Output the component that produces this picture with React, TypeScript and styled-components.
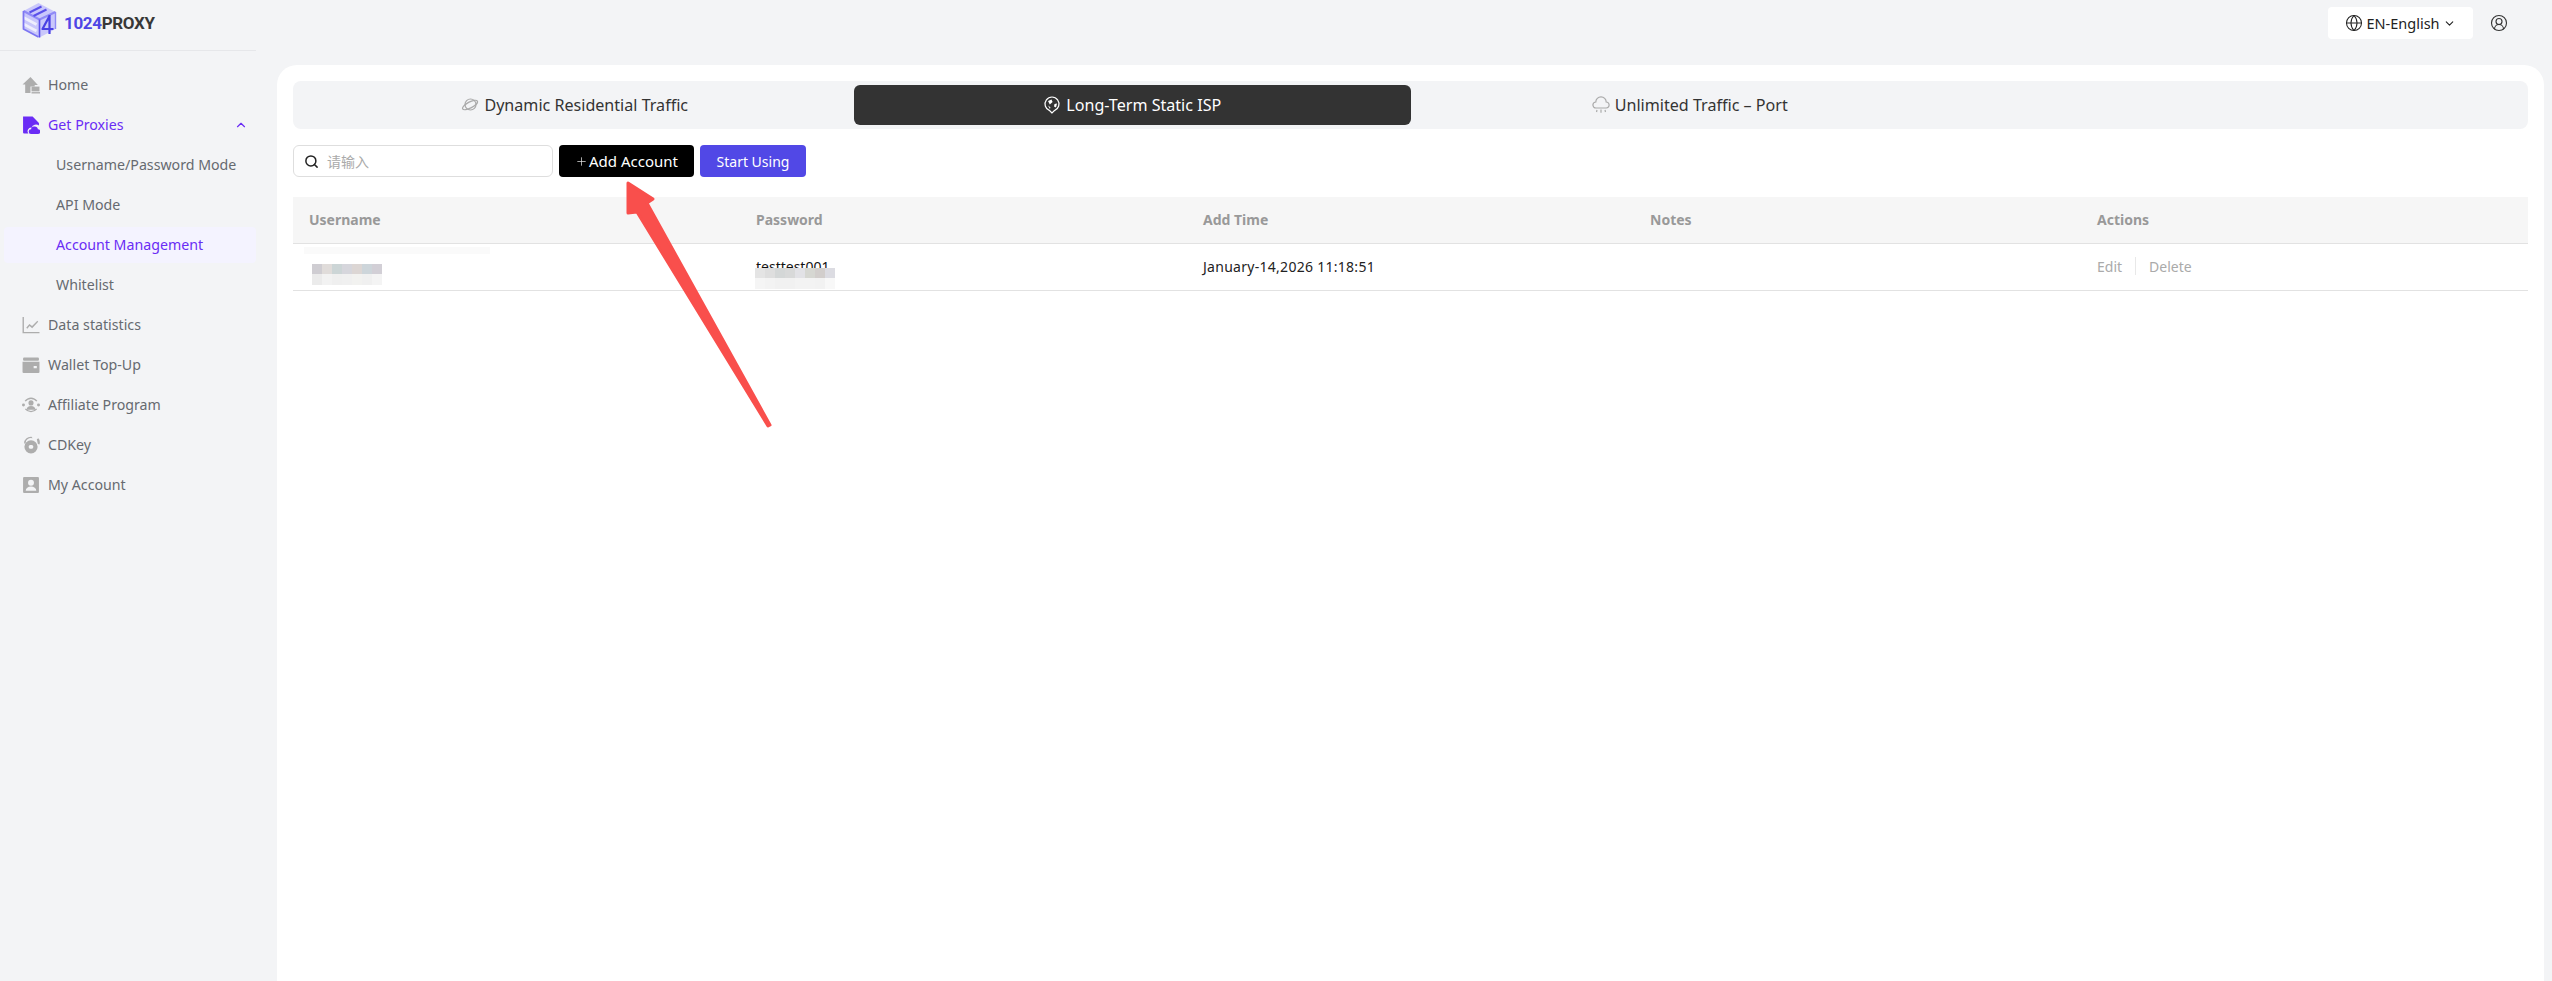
import React from "react";
import styled, { createGlobalStyle } from "styled-components";
import { ChevronDown, ChevronUp, Search, Globe, CircleUserRound, Plus } from "lucide-react";

const FONT = `"Noto Sans", "Noto Sans CJK SC", sans-serif`;

const Global = createGlobalStyle`
  html, body { margin: 0; padding: 0; height: 100%; background: #f3f4f6; overflow: hidden; }
  body { font-family: ${FONT}; }
  * { box-sizing: border-box; }
`;

const Page = styled.div`
  position: relative;
  display: flex;
  width: 100%;
  height: 100vh;
  background: #f3f4f6;
  overflow: hidden;
`;
const Sidebar = styled.aside`
  width: 277px;
  flex: none;
`;
const LogoRow = styled.div`
  width: 256px;
  height: 51px;
  padding: 2px 0 0 21px;
  display: flex;
  align-items: center;
  gap: 6px;
  border-bottom: 1px solid #e6e7ea;
`;
const LogoText = styled.div`
  font-family: "Roboto", sans-serif;
  font-weight: 700;
  font-size: 17px;
  letter-spacing: -0.35px;
  color: #383838;
  margin-top: -6px;
`;
const LogoAccent = styled.span`
  color: #4f46e5;
`;
const Menu = styled.nav`
  display: flex;
  flex-direction: column;
  padding: 14px 21px 0 4px;
`;
const Item = styled.div<{ $active?: boolean; $sub?: boolean; $current?: boolean }>`
  height: 36px;
  margin: 2px 0;
  padding-bottom: 1px;
  display: flex;
  align-items: center;
  gap: 8px;
  padding-left: ${(p) => (p.$sub ? "52px" : "18px")};
  font-size: 14.2px;
  color: ${(p) => (p.$active || p.$current ? "#6a2cf5" : "#666a70")};
  background: ${(p) => (p.$current ? "#f4f3ff" : "transparent")};
  border-radius: 4px;
`;
const ItemIcon = styled.svg<{ $active?: boolean }>`
  width: 18px;
  height: 18px;
  flex: none;
  fill: ${(p) => (p.$active ? "#6a2cf5" : "#adadad")};
`;
const Caret = styled(ChevronUp)`
  margin-left: auto;
  margin-right: 8px;
  color: #6a2cf5;
`;
const Main = styled.main`
  flex: 1;
  min-width: 0;
  display: flex;
  flex-direction: column;
  padding-right: 8px;
`;
const Topbar = styled.header`
  height: 65px;
  flex: none;
  padding: 7px 36px 0 0;
  display: flex;
  justify-content: flex-end;
  align-items: flex-start;
  gap: 17px;
`;
const LangButton = styled.div`
  width: 145px;
  height: 32px;
  background: #fff;
  border-radius: 4px;
  display: flex;
  align-items: center;
  justify-content: center;
  gap: 3px;
  font-size: 14.5px;
  color: #222;
`;
const UserIcon = styled(CircleUserRound)`
  margin-top: 7px;
  color: #333;
`;
const Card = styled.section`
  flex: 1;
  background: #fff;
  border-radius: 20px 20px 0 0;
  padding: 16px 16px 0 16px;
`;
const TabBar = styled.div`
  height: 48px;
  background: #f3f4f6;
  border-radius: 8px;
  display: flex;
  align-items: center;
  padding: 0 3px;
`;
const Tab = styled.div<{ $active?: boolean }>`
  width: 557.5px;
  height: 40px;
  display: flex;
  align-items: center;
  justify-content: center;
  gap: 5px;
  font-size: 16.1px;
  border-radius: 6px;
  color: ${(p) => (p.$active ? "#fff" : "#333")};
  background: ${(p) => (p.$active ? "#333" : "transparent")};
`;
const TabIcon = styled.svg<{ $active?: boolean }>`
  width: 18px;
  height: 18px;
  flex: none;
  fill: none;
  stroke: ${(p) => (p.$active ? "#fff" : "#aaa")};
  stroke-width: 1.2;
`;
const Toolbar = styled.div`
  display: flex;
  gap: 6px;
  margin-top: 16px;
  height: 32px;
`;
const SearchBox = styled.div`
  width: 260px;
  height: 32px;
  border: 1px solid #dedede;
  border-radius: 6px;
  display: flex;
  align-items: center;
  gap: 8px;
  padding-left: 10px;
  font-size: 14px;
  color: #aaa;
`;
const ActionButton = styled.div<{ $bg: string; $w: number; $size?: number }>`
  width: ${(p) => p.$w}px;
  height: 32px;
  background: ${(p) => p.$bg};
  color: #fff;
  border-radius: 4px;
  font-size: ${(p) => p.$size ?? 14}px;
  display: flex;
  align-items: center;
  justify-content: center;
  gap: 1px;
`;
const Table = styled.div`
  margin-top: 20px;
`;
const Row = styled.div<{ $head?: boolean }>`
  display: grid;
  grid-template-columns: repeat(5, 1fr);
  height: 47px;
  padding-bottom: 2px;
  align-items: center;
  background: ${(p) => (p.$head ? "#f6f6f6" : "#fff")};
  border-bottom: 1px solid #e2e2e2;
  font-size: 14px;
  font-weight: ${(p) => (p.$head ? 700 : 400)};
  color: ${(p) => (p.$head ? "#999" : "#222")};
`;
const Cell = styled.div`
  padding-left: 16px;
`;
const DateCell = styled(Cell)`
  letter-spacing: 0.28px;
`;
const UserCell = styled.div`
  align-self: stretch;
  padding: 3px 0 0 11px;
  display: flex;
  flex-direction: column;
  gap: 10px;
`;
const FaintBar = styled.div`
  width: 186px;
  height: 7px;
  background: #fafafa;
`;
const Mosaic = styled.div<{ $indent?: number }>`
  display: grid;
  grid-auto-flow: column;
  grid-auto-columns: 10px;
  grid-template-rows: 10px 11px;
  width: max-content;
  margin-left: ${(p) => p.$indent ?? 0}px;
`;
const Pixel = styled.i<{ $c: string }>`
  display: block;
  background: ${(p) => p.$c};
`;
const PasswordCell = styled(Cell)`
  position: relative;
  color: #111;
`;
const PasswordMask = styled(Mosaic)`
  position: absolute;
  left: 15px;
  top: 11px;
  margin: 0;
`;
const Actions = styled(Cell)`
  display: flex;
  align-items: center;
  gap: 13px;
  color: #aaa;
`;
const Sep = styled.span`
  width: 1px;
  height: 18px;
  background: #e8e8e8;
`;
const Arrow = styled.svg`
  position: absolute;
  left: 620px;
  top: 175px;
  width: 155px;
  height: 260px;
  pointer-events: none;
`;

const Logo = () => (
  <svg width="37" height="36" viewBox="0 0 36 36" style={{ marginTop: -12 }}>
    <g fill="none" strokeLinejoin="round">
      <path d="M2 9 L17 1 L34 10 L34 27 L18 35.5 L2 27 Z" fill="#c9c7fb" />
      <path d="M2 9 L18 17.5 L34 10" stroke="#8f8af6" strokeWidth="2" />
      <path d="M8 10.5 L20 4.5 M12 14 L25 7.5" stroke="#5a50ea" strokeWidth="2.2" />
      <path d="M2 15.5 L15 22.5 M2 22 L15 29" stroke="#eeeefd" strokeWidth="2.6" />
      <path d="M18 17.5 V35.5" stroke="#5a50ea" strokeWidth="1.6" />
      <path d="M28 14 L21 27 L32 27 M28 13 V32" stroke="#4a40e4" strokeWidth="2.2" />
      <path d="M2 9 V27 L17 35" stroke="#7d76f2" strokeWidth="1.8" />
      <path d="M34 10 V27" stroke="#8f8af6" strokeWidth="1.4" />
    </g>
  </svg>
);

const icons: Record<string, React.ReactNode> = {
  home: (
    <>
      <path d="M8 1 L0.5 8 H3 V16 H8 V10 H12 V8.5 H15 L8 1 Z" />
      <rect x="9" y="10" width="7.5" height="4.5" />
      <rect x="9" y="15.2" width="8" height="1.3" />
    </>
  ),
  proxies: (
    <path d="M1 0.5 H10 L16 6.5 V9 A4.5 4.5 0 0 0 9 11 A3.4 3.4 0 0 0 6 16.5 H2 A1 1 0 0 1 1 15.5 Z M12 10 A3 3 0 0 1 15 12.5 A2.2 2.2 0 0 1 15 17 H8.5 A2.2 2.2 0 0 1 8.6 12.6 A3 3 0 0 1 12 10 Z" />
  ),
  data: (
    <>
      <path d="M0.5 1 H1.8 V15 H16.5 V16.3 H0.5 Z" />
      <path d="M4 11 L7 7.5 L9.5 9.5 L14.5 4.5 L15.3 5.5 L9.6 11.5 L7.2 9.5 L5 12 Z" />
    </>
  ),
  wallet: (
    <>
      <rect x="1" y="1.5" width="15" height="3" rx="1" />
      <path d="M0.5 5.5 H16.5 V15 A1 1 0 0 1 15.5 16 H1.5 A1 1 0 0 1 0.5 15 Z M11 9.5 V11.5 H14 V9.5 Z" fillRule="evenodd" />
    </>
  ),
  affiliate: (
    <>
      <circle cx="8.5" cy="6.5" r="2.4" />
      <path d="M4.5 13 A4 3.5 0 0 1 12.5 13 Z" />
      <circle cx="1.4" cy="8.5" r="1.4" />
      <circle cx="15.6" cy="8.5" r="1.4" />
      <path d="M2.5 4.5 A7.5 7.5 0 0 1 14.5 4.5 L13.5 5.3 A6.2 6.2 0 0 0 3.5 5.3 Z M2.7 12.5 A7.5 7.5 0 0 0 14.3 12.5 L13.3 11.8 A6.2 6.2 0 0 1 3.7 11.8 Z" />
    </>
  ),
  cdkey: (
    <>
      <path d="M8.5 4 A6 6 0 1 1 8.5 16.5 A6 6 0 1 1 8.5 4 Z M8.5 8.5 A1.8 1.8 0 1 0 8.5 12 A1.8 1.8 0 1 0 8.5 8.5 Z" fillRule="evenodd" />
      <path d="M2 7 A6.5 6 0 0 1 9 0.8 L10 2.2 A5 5 0 0 0 3.4 7 Z M14 3 L15.5 2.2 A6 6 0 0 1 16.5 8 L15 7.5 Z" />
    </>
  ),
  account: (
    <path fillRule="evenodd" d="M2 1 H15 A1 1 0 0 1 16 2 V15 A1 1 0 0 1 15 16 H2 A1 1 0 0 1 1 15 V2 A1 1 0 0 1 2 1 Z M8.5 3.5 A2.8 2.8 0 1 0 8.5 9.1 A2.8 2.8 0 1 0 8.5 3.5 Z M3.5 14 H13.5 A5 4 0 0 0 3.5 14 Z" />
  ),
};

const NavIcon = ({ name, active }: { name: string; active?: boolean }) => (
  <ItemIcon viewBox="0 0 17 17" $active={active}>
    {icons[name]}
  </ItemIcon>
);

const userRows = [
  ["#cfcdd2", "#ebebeb"],
  ["#e0dcda", "#f2f2f2"],
  ["#ccd5d6", "#efefef"],
  ["#d6d6dc", "#f0f0f0"],
  ["#dcd6d4", "#f2f2f0"],
  ["#cdd5da", "#f0f0f0"],
  ["#d2cfd6", "#f4f4f4"],
];
const passRows = [
  ["#e4e4e4", "#f5f5f5"],
  ["#dedede", "#f3f3f3"],
  ["#d4d7d7", "#f1f1f1"],
  ["#d8d9d9", "#f1f1f1"],
  ["#e2e2e6", "#f3f3f3"],
  ["#d6d7d2", "#f3f3f3"],
  ["#d2cecc", "#f2f2f2"],
  ["#dcdce2", "#f8f8f8"],
];

const Pixels = ({ cols }: { cols: string[][] }) => (
  <>
    {cols.flatMap((c, i) => [<Pixel key={`${i}a`} $c={c[0]} />, <Pixel key={`${i}b`} $c={c[1]} />])}
  </>
);

export default function App() {
  return (
    <Page>
      <Global />
      <Sidebar>
        <LogoRow>
          <Logo />
          <LogoText>
            <LogoAccent>1024</LogoAccent>PROXY
          </LogoText>
        </LogoRow>
        <Menu>
          <Item><NavIcon name="home" />Home</Item>
          <Item $active>
            <NavIcon name="proxies" active />Get Proxies
            <Caret size={14} strokeWidth={2} />
          </Item>
          <Item $sub>Username/Password Mode</Item>
          <Item $sub>API Mode</Item>
          <Item $sub $current>Account Management</Item>
          <Item $sub>Whitelist</Item>
          <Item><NavIcon name="data" />Data statistics</Item>
          <Item><NavIcon name="wallet" />Wallet Top-Up</Item>
          <Item><NavIcon name="affiliate" />Affiliate Program</Item>
          <Item><NavIcon name="cdkey" />CDKey</Item>
          <Item><NavIcon name="account" />My Account</Item>
        </Menu>
      </Sidebar>
      <Main>
        <Topbar>
          <LangButton>
            <Globe size={18} strokeWidth={1.4} />
            EN-English
            <ChevronDown size={13} strokeWidth={2} />
          </LangButton>
          <UserIcon size={18} strokeWidth={1.5} />
        </Topbar>
        <Card>
          <TabBar>
            <Tab>
              <TabIcon viewBox="0 0 18 18">
                <circle cx="9.5" cy="8.5" r="5.5" />
                <ellipse cx="9" cy="9" rx="8.3" ry="3" transform="rotate(-28 9 9)" />
              </TabIcon>
              Dynamic Residential Traffic
            </Tab>
            <Tab $active>
              <TabIcon viewBox="0 0 18 18" $active>
                <path d="M9 17 L6.6 14.6 A7 7 0 1 1 11.4 14.6 Z" />
                <path d="M5 5 L8.5 3.6 L9.6 6 L6.8 8.4 Z M11.5 8 L14 7.5 L13 11.5 L11 10.5 Z M5 9.5 L7.4 11.2 L7 13 Z" fill="#fff" stroke="none" />
              </TabIcon>
              Long-Term Static ISP
            </Tab>
            <Tab>
              <TabIcon viewBox="0 0 18 18">
                <path d="M4 12 A3 3 0 0 1 3.8 6 A5.2 5.2 0 0 1 14.2 6 A3 3 0 0 1 14 12 Z" />
                <path d="M5 14 L4.5 16 M9 13.5 V16.8 M13 14 L13.5 16" />
              </TabIcon>
              Unlimited Traffic – Port
            </Tab>
          </TabBar>
          <Toolbar>
            <SearchBox>
              <Search size={15} color="#222" strokeWidth={2.4} />
              请输入
            </SearchBox>
            <ActionButton $bg="#000" $w={135} $size={15}>
              <Plus size={13} strokeWidth={1.4} color="#ddd" />Add Account
            </ActionButton>
            <ActionButton $bg="#5148e6" $w={106}>Start Using</ActionButton>
          </Toolbar>
          <Table>
            <Row $head>
              <Cell>Username</Cell>
              <Cell>Password</Cell>
              <Cell>Add Time</Cell>
              <Cell>Notes</Cell>
              <Cell>Actions</Cell>
            </Row>
            <Row>
              <UserCell>
                <FaintBar />
                <Mosaic $indent={8}><Pixels cols={userRows} /></Mosaic>
              </UserCell>
              <PasswordCell>
                testtest001
                <PasswordMask><Pixels cols={passRows} /></PasswordMask>
              </PasswordCell>
              <DateCell>January-14,2026 11:18:51</DateCell>
              <Cell />
              <Actions>
                <span>Edit</span>
                <Sep />
                <span>Delete</span>
              </Actions>
            </Row>
          </Table>
        </Card>
      </Main>
      <Arrow viewBox="0 0 155 260">
        <path
          d="M8 8 L8 38 L17 37 L148 251 L150 250 L27 28 L33 24 Z"
          fill="#f94f4c"
          stroke="#f94f4c"
          strokeWidth="3"
          strokeLinejoin="round"
        />
      </Arrow>
    </Page>
  );
}
